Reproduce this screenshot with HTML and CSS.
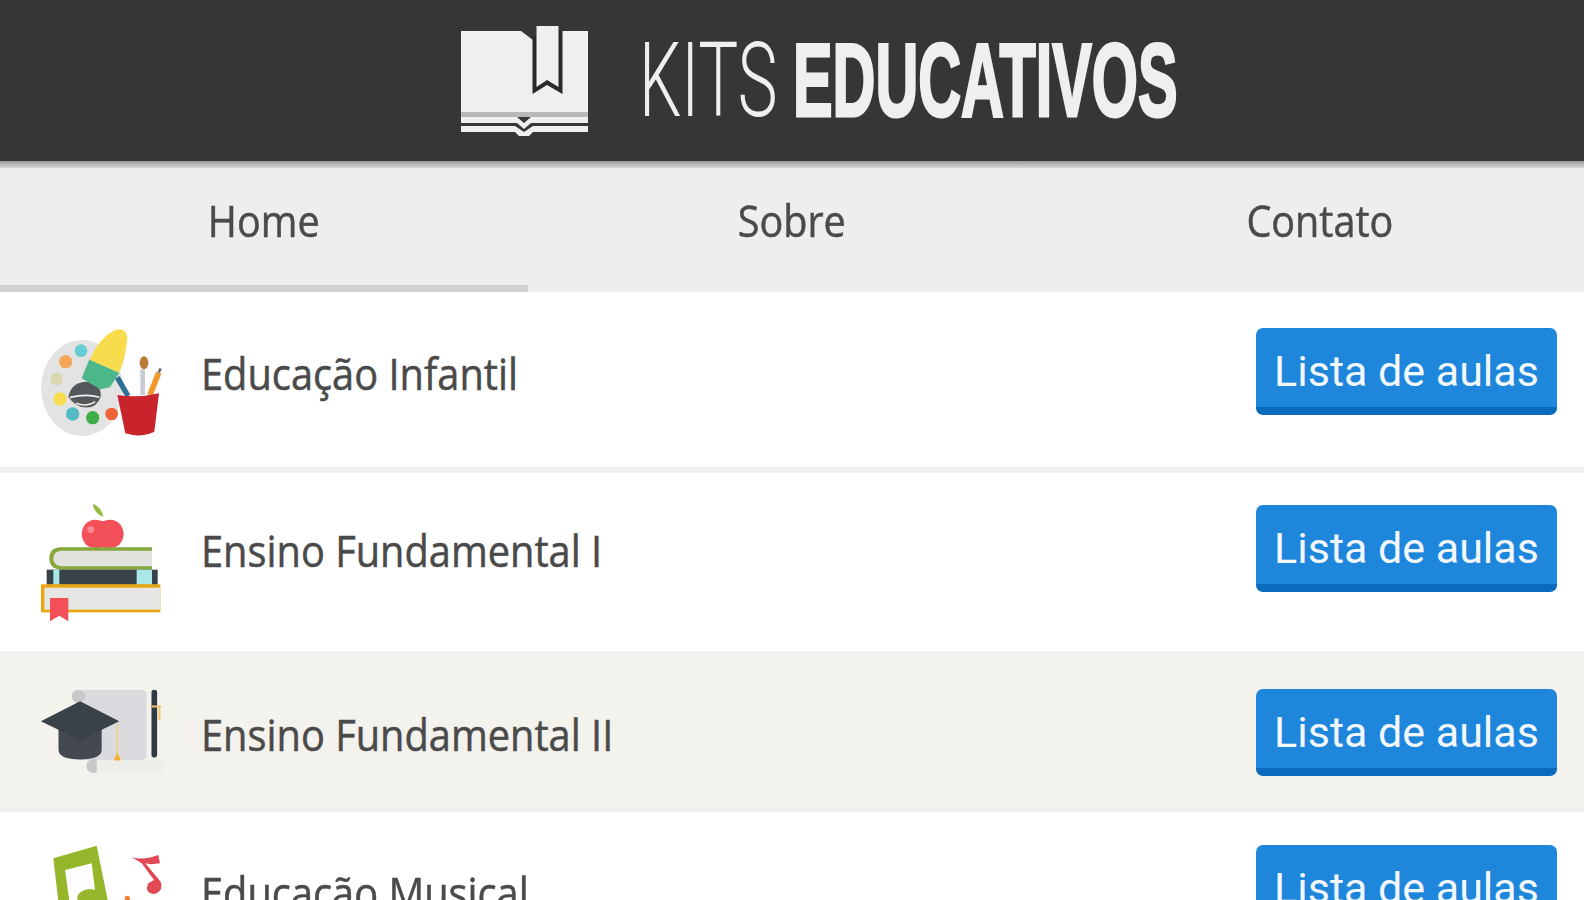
FILE: index.html
```html
<!DOCTYPE html>
<html lang="pt-BR">
<head>
<meta charset="utf-8">
<title>Kits Educativos</title>
<link rel="stylesheet" href="styles.css">
</head>
<body>
<header class="top">
  <svg class="logo" viewBox="461 25 128 112" aria-hidden="true">
    <path class="pg" d="M461 31H521L533 40V112H461ZM558 31H588V112H558Z"/>
    <path class="pg" d="M530 80H565V112H530Z"/>
    <path class="bm" d="M532.5 36V94L547 85L562.5 94V31H558.5V26H536.5V36Z"/>
    <path class="pg" d="M536.5 26H558.5V87L547 80L536.5 87Z"/>
    <path class="rule" d="M461 112H588V117H461Z"/>
    <path class="pg" d="M461 117H517L524 123L531 117H588V123H531L524 129L517 123H461ZM461 126H515L524 132L533 126H588V132H533L529 136H519L515 132H461Z"/>
  </svg>
  <h1 class="title"><span class="thin">KITS</span><span class="bold">EDUCATIVOS</span></h1>
</header>
<nav class="nav">
  <a class="tab tab-on"><span class="tab-text">Home</span></a>
  <a class="tab"><span class="tab-text">Sobre</span></a>
  <a class="tab"><span class="tab-text">Contato</span></a>
</nav>
<main>
  <section class="row row1">
    <svg class="ic ic1" viewBox="120 84 375 330" aria-hidden="true">
      <ellipse cx="246" cy="264" rx="123" ry="144" fill="#e3e3e3"/>
      <circle cx="243" cy="152" r="19" fill="#67cdd4"/><circle cx="197" cy="185" r="20" fill="#f4a65a"/>
      <circle cx="170" cy="237" r="19" fill="#d9d6b0"/><circle cx="180" cy="297" r="20" fill="#f6dd50"/>
      <circle cx="218" cy="342" r="20" fill="#53bcc4"/><circle cx="278" cy="353" r="20" fill="#3fae4a"/>
      <circle cx="335" cy="342" r="19" fill="#ee6338"/>
      <path d="M205 290Q215 245 262 245Q305 250 302 290Q290 325 255 322Q225 320 205 290Z" fill="#54585a"/>
      <path d="M210 292Q262 280 298 292M228 310Q262 322 285 305" fill="none" stroke="#f2f2f2" stroke-width="5"/>
      <path d="M268 178L358 218L330 262L300 268L245 235Z" fill="#4db78c"/>
      <path d="M270 180Q295 115 345 90Q375 80 382 110Q378 170 358 218Z" fill="#f8dc4e"/>
      <path d="M352 232L384 288" stroke="#2b6e96" stroke-width="16" fill="none"/>
      <path d="M428 285V208" stroke="#c9ccd0" stroke-width="14" fill="none"/>
      <ellipse cx="432" cy="188" rx="13" ry="19" fill="#b97a3a"/>
      <path d="M450 285L476 218" stroke="#f0982a" stroke-width="17" fill="none"/>
      <path d="M476 218L482 205" stroke="#6b7478" stroke-width="8" fill="none"/>
      <path d="M352 285Q415 295 477 280L463 395Q420 415 376 400Z" fill="#c9232c"/>
    </svg>
    <span class="label"><span class="squeeze">Educação Infantil</span></span>
    <a class="btn">Lista de aulas</a>
  </section>
  <section class="row row2">
    <svg class="ic ic2" viewBox="120 70 375 360" aria-hidden="true">
      <path d="M278 72Q305 82 310 112Q282 100 278 72Z" fill="#96b93f"/>
      <path d="M308 125Q340 112 362 135Q382 165 358 195Q335 212 308 203Q280 212 258 195Q234 165 254 135Q276 112 308 125Z" fill="#f4505a"/>
      <circle cx="272" cy="150" r="10" fill="#f98b90"/>
      <path d="M456 203H182Q148 205 148 236Q148 268 182 270H456Z" fill="#86a83c"/>
      <path d="M456 213H185Q160 215 160 236Q160 258 185 260H456Z" fill="#e2e2de"/>
      <rect x="140" y="270" width="333" height="45" fill="#38424a"/>
      <path d="M160 270H178V315H160ZM410 270H456V315H410Z" fill="#a9e8e6"/>
      <rect x="123" y="314" width="358" height="84" fill="#eba50f"/>
      <rect x="133" y="324" width="348" height="66" fill="#e6e6e4"/>
      <path d="M150 355H205V425L178 408L150 425Z" fill="#f4505a"/>
    </svg>
    <span class="label"><span class="squeeze">Ensino Fundamental I</span></span>
    <a class="btn">Lista de aulas</a>
  </section>
  <section class="row row3">
    <svg class="ic ic3" viewBox="120 115 375 265" aria-hidden="true">
      <rect x="240" y="120" width="200" height="212" rx="14" fill="#d9dbdf"/>
      <circle cx="235" cy="140" r="20" fill="#c8c8c8"/>
      <circle cx="280" cy="350" r="21" fill="#c8c8c8"/>
      <path d="M290 334H490V370H290Z" fill="#efedea"/>
      <path d="M175 232H305V300Q305 330 240 330Q175 330 175 300Z" fill="#44494f"/>
      <path d="M122 215L240 155L358 215L240 272Z" fill="#3b4148"/>
      <rect x="455" y="120" width="17" height="204" rx="8" fill="#2f3a45"/>
      <path d="M455 168H484V174H482V212H476V174H455Z" fill="#f6c56a"/>
      <path d="M352 225V318" stroke="#f2d296" stroke-width="6"/>
      <path d="M342 333L352 310L364 333Z" fill="#f5b030"/>
    </svg>
    <span class="label"><span class="squeeze">Ensino Fundamental II</span></span>
    <a class="btn">Lista de aulas</a>
  </section>
  <section class="row row4">
    <svg class="ic ic4" viewBox="120 585 375 300" aria-hidden="true">
      <path d="M160 625L290 587L325 760H290L275 640L195 660L212 780H178Z" fill="#95b62b"/>
      <ellipse cx="270" cy="745" rx="38" ry="28" fill="#95b62b"/>
      <path d="M395 622Q430 632 475 615L480 640Q450 645 436 640L482 695Q492 725 460 732Q432 728 445 700L462 690L425 640Z" fill="#e14a55"/>
      <circle cx="382" cy="745" r="8" fill="#f0803a"/>
    </svg>
    <span class="label"><span class="squeeze">Educação Musical</span></span>
    <a class="btn">Lista de aulas</a>
  </section>
</main>
</body>
</html>
```

FILE: styles.css
```css
* { box-sizing: border-box; }
html, body { margin: 0; height: 900px; overflow: hidden; background: #fff; }
body { font-family: "Open Sans", sans-serif; color: #4a4a4a; }
.top, .nav, main { filter: blur(.6px); }

.top { height: 168px; background: linear-gradient(#363636 161px, #9c9c9c 161px, #d6d6d6 168px); display: flex; align-items: flex-start; padding-left: 461px; }
.logo { width: 128px; height: 112px; margin-top: 25px; flex: none; }
.pg { fill: #efefef; }
.bm { fill: #2a2a2a; }
.rule { fill: #b8b8b8; }
.title { margin: 0 0 0 50px; padding-top: 28px; display: flex; font-size: 103px; line-height: 106px; font-weight: 400; color: #efefef; white-space: nowrap; }
.thin { display: block; width: 154px; font-family: Roboto, sans-serif; font-weight: 300; transform: scaleX(.65); transform-origin: 0 0; }
.bold { display: block; font-family: "Liberation Sans", sans-serif; font-weight: 700; transform: scaleX(.576); transform-origin: 0 0; -webkit-text-stroke: 3px #efefef; }

.nav { display: flex; height: 124px; background: #eee; }
.tab { flex: 1; text-align: center; padding-top: 23px; font-size: 43px; line-height: 60px; -webkit-text-stroke: .5px #4a4a4a; }
.tab-on { border-bottom: 7px solid #d2d2d2; }
.tab-text { display: inline-block; transform: scaleX(.92); }

.row { display: flex; align-items: flex-start; padding: 0 27px 0 40px; background: #fff; border-bottom: 6px solid #f0f0f0; }
.row1 { height: 181px; padding-top: 36px; }
.row2 { height: 182px; padding-top: 30px; border-bottom-width: 4px; }
.row3 { height: 157px; padding-top: 33px; background: #f4f2ed; border-bottom-width: 7px; }
.row4 { height: 88px; padding-top: 33px; border-bottom: 0; }

.ic { width: 125px; flex: none; }
.ic1 { height: 110px; }
.ic2 { height: 120px; }
.ic3 { height: 88px; }
.ic4 { height: 100px; }

.label { flex: 1; margin-left: 36px; font-size: 43px; line-height: 60px; white-space: nowrap; -webkit-text-stroke: .5px #4a4a4a; }
.row1 .label { margin-top: 16px; }
.row2 .label { margin-top: 18px; }
.row3 .label { margin-top: 17px; }
.row4 .label { margin-top: 18px; }
.row2 .btn { margin-top: 2px; }
.row3 .btn { margin-top: 1px; }
.squeeze { display: inline-block; transform: scaleX(.925); transform-origin: 0 50%; }

.btn { flex: none; width: 301px; height: 87px; display: flex; align-items: center; justify-content: center; padding-top: 7px; background: #1e87dc; border-bottom: 8px solid #0a6bbd; border-radius: 7px; color: #f2f8fd; font-family: Roboto, sans-serif; font-weight: 400; font-size: 43px; }
```
